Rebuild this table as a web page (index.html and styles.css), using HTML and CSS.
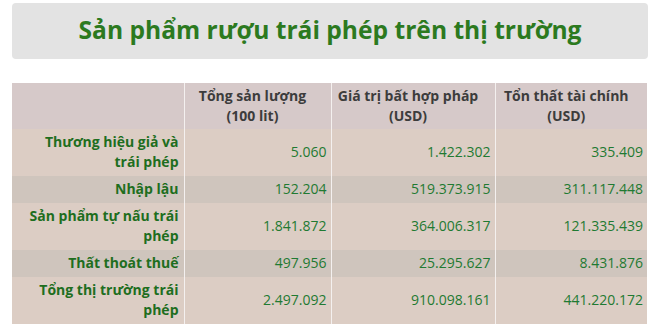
FILE: index.html
```html
<!DOCTYPE html>
<html lang="vi">
<head>
<meta charset="utf-8">
<link rel="stylesheet" href="styles.css">
</head>
<body>
<div class="page">
  <div class="title-box"><h1 class="title">Sản phẩm rượu trái phép trên thị trường</h1></div>
  <table class="data">
    <colgroup>
      <col class="c1"><col class="c2"><col class="c3"><col class="c4">
    </colgroup>
    <thead>
      <tr>
        <th></th>
        <th>Tổng sản lượng<br>(100 lit)</th>
        <th>Giá trị bất hợp pháp<br>(USD)</th>
        <th>Tổn thất tài chính<br>(USD)</th>
      </tr>
    </thead>
    <tbody>
      <tr><td class="label">Thương hiệu giả và trái phép</td><td>5.060</td><td>1.422.302</td><td>335.409</td></tr>
      <tr class="alt"><td class="label">Nhập lậu</td><td>152.204</td><td>519.373.915</td><td>311.117.448</td></tr>
      <tr><td class="label">Sản phẩm tự nấu trái phép</td><td>1.841.872</td><td>364.006.317</td><td>121.335.439</td></tr>
      <tr class="alt"><td class="label">Thất thoát thuế</td><td>497.956</td><td>25.295.627</td><td>8.431.876</td></tr>
      <tr><td class="label">Tổng thị trường trái phép</td><td>2.497.092</td><td>910.098.161</td><td>441.220.172</td></tr>
    </tbody>
  </table>
</div>
</body>
</html>
```
FILE: styles.css
```css
html, body {
  margin: 0;
  padding: 0;
  background: #ffffff;
}
body {
  font-family: "Open Sans", "Liberation Sans", sans-serif;
}
.page {
  padding: 3px 12px 0 12px;
}
.title-box {
  width: 636px;
  height: 56px;
  background: #e3e3e3;
  border-radius: 4px;
  display: flex;
  align-items: center;
  justify-content: center;
}
.title {
  margin: 0;
  font-size: 24.6px;
  font-weight: 700;
  color: #2c7a1f;
  line-height: 1;
  padding-bottom: 2px;
}
.data {
  margin-top: 24px;
  width: 635px;
  border-collapse: collapse;
  table-layout: fixed;
  font-size: 14px;
  line-height: 20px;
}
.c1 { width: 172px; }
.c2 { width: 147px; }
.c3 { width: 164px; }
.c4 { width: 152px; }
.data th {
  background: #d6c9c9;
  color: #3c3c3c;
  font-weight: 700;
  text-align: center;
  padding: 3px 14px 3px 4px;
  border-left: 1px solid #f4f0ef;
}
.data th:first-child { border-left: none; }
.data td {
  background: #dccdc4;
  color: #1f7a32;
  text-align: right;
  padding: 3px 4px 4px 4px;
  border-left: 1px solid #f4f0ef;
}
.data td:first-child { border-left: none; }
.data tr.alt td { background: #cfc5bd; }
.data td.label {
  font-weight: 700;
  color: #1e6e1e;
  padding-left: 14px;
  padding-right: 5px;
}
```
